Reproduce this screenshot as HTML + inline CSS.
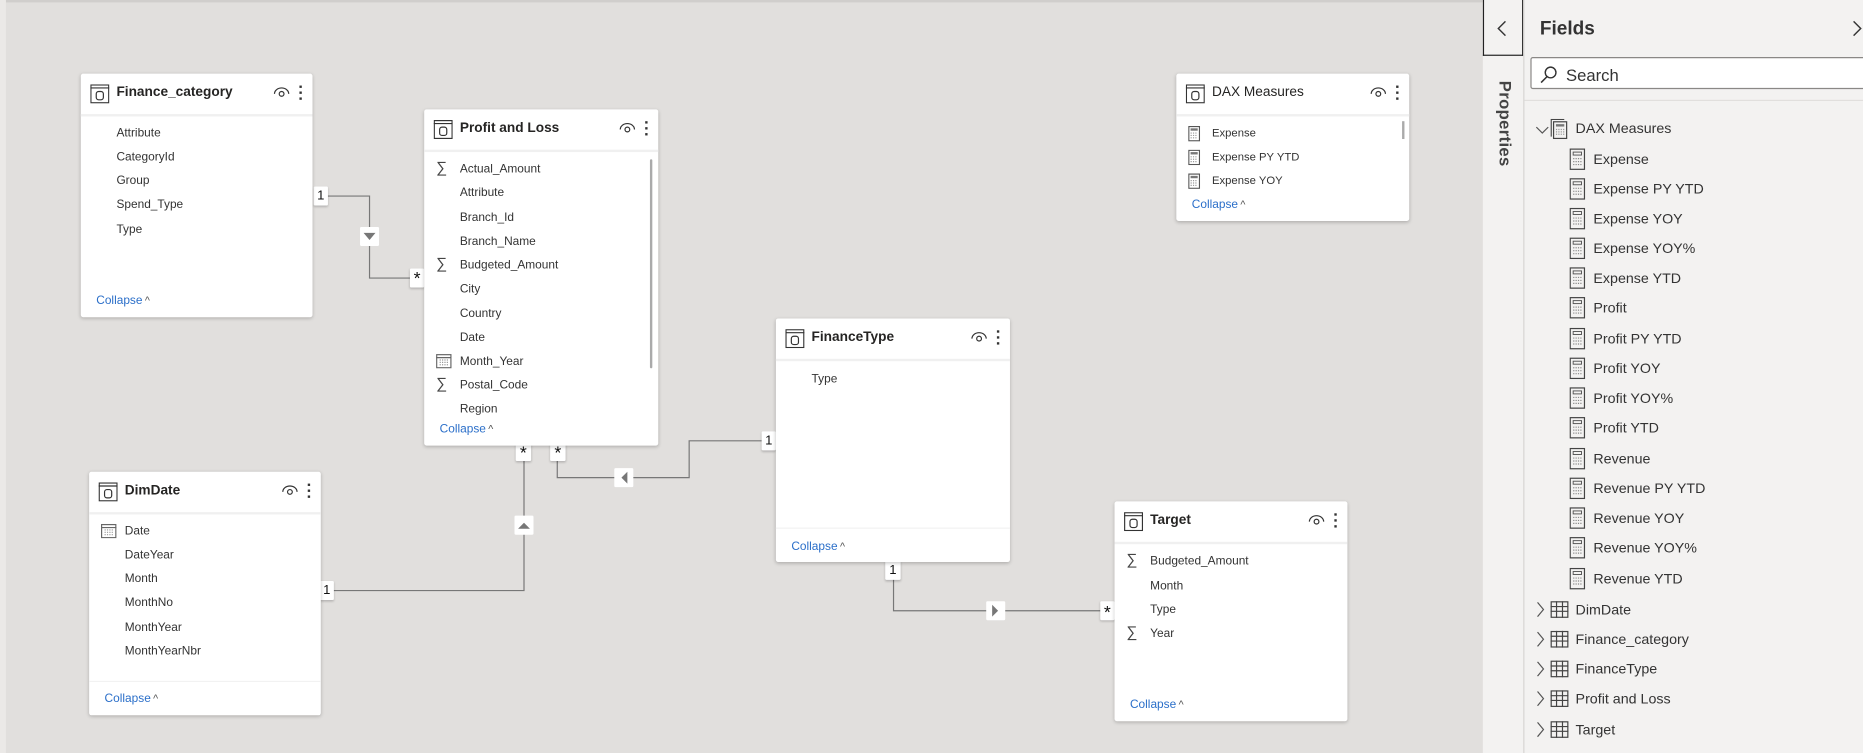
<!DOCTYPE html>
<html><head><meta charset="utf-8"><style>
html,body{margin:0;padding:0;width:1863px;height:753px;overflow:hidden;background:#e1dfdd}
#w{position:absolute;left:0;top:0;width:1568px;height:634px;transform:scale(1.1882);transform-origin:0 0;font-family:"Liberation Sans",sans-serif;}
.canvas{position:absolute;left:0;top:0;width:1248px;height:634px;background:#e1dfdd;border-top:2px solid #d0cecc;box-sizing:border-box}
.lstrip{position:absolute;left:0;top:0;width:5px;height:634px;background:#ebe9e7}
.card{position:absolute;background:#fff;box-shadow:0 1px 3px rgba(0,0,0,.22);border-radius:2px}
.hd{position:absolute;left:0;right:0;top:0;height:34px;border-bottom:2px solid #f0f0f0}
.ti{position:absolute;left:8px;top:9px}
.tt{position:absolute;left:30px;top:10px;font-size:11.5px;font-weight:bold;color:#252423}
.eye{position:absolute;right:19px;top:11px}
.dots{position:absolute;right:9px;top:10px;width:2px}
.dots i{display:block;width:2px;height:2px;background:#333;margin-bottom:3px}
.f{position:absolute;left:30px;font-size:10px;color:#333;line-height:12px}
.fi{position:absolute;left:10px}
.col{position:absolute;left:13px;font-size:10px;color:#2b6fc9}
.col span{font-size:9px;color:#555;margin-left:2px}
.sep{position:absolute;left:0;right:0;height:1px;background:#f2f2f2}
.lbl{position:absolute;background:#fff;font-size:11px;color:#111;text-align:center;box-shadow:0 1px 2px rgba(0,0,0,.2);border-radius:1px}
.panel{position:absolute;left:1282px;top:0;width:286px;height:634px;background:#f3f2f1;border-left:1px solid #d8d6d4}
.pstrip{position:absolute;left:1248px;top:0;width:34px;height:634px;background:#f3f2f1}
.tr{position:absolute;font-size:12px;color:#333;white-space:nowrap}
.mi{position:absolute;left:1322px}
</style></head><body><div id="w">
<div class="canvas"></div><div class="lstrip"></div>

<svg style="position:absolute;left:0;top:0" width="1248" height="634">
<g fill="none" stroke="#777" stroke-width="1">
<path d="M275 165H311V234H352"/>
<path d="M469 385V402H580V371H646"/>
<path d="M441 385V497H280"/>
<path d="M752 485V514H932"/>
</g>
<g>
<rect x="303" y="191" width="16" height="16" fill="#fff" rx="1"/><path d="M306 196h10l-5 6z" fill="#777"/>
<rect x="517" y="394" width="16" height="16" fill="#fff" rx="1"/><path d="M528 397v10l-5-5z" fill="#777"/>
<rect x="433" y="434" width="16" height="16" fill="#fff" rx="1"/><path d="M436 445h10l-5-5z" fill="#777"/>
<rect x="830" y="506" width="16" height="16" fill="#fff" rx="1"/><path d="M835 509v10l5-5z" fill="#777"/>
</g>
</svg>
<div class="lbl" style="left:264px;top:157px;width:12px;height:16px;line-height:16px">1</div>
<div class="lbl" style="left:345px;top:226px;width:12px;height:16px;line-height:18px;font-size:15px">*</div>
<div class="lbl" style="left:434px;top:373px;width:13px;height:15px;line-height:18px;font-size:15px">*</div>
<div class="lbl" style="left:463px;top:373px;width:13px;height:15px;line-height:18px;font-size:15px">*</div>
<div class="lbl" style="left:641px;top:363px;width:12px;height:16px;line-height:16px">1</div>
<div class="lbl" style="left:269px;top:489px;width:12px;height:16px;line-height:16px">1</div>
<div class="lbl" style="left:745px;top:472px;width:13px;height:16px;line-height:16px">1</div>
<div class="lbl" style="left:926px;top:506px;width:12px;height:16px;line-height:19px;font-size:15px">*</div>

<div class="card" style="left:68px;top:62px;width:195px;height:205px">
<div class="hd"><svg class="ti" width="16" height="16"><rect x=".5" y=".5" width="15" height="15" fill="none" stroke="#333"/><line x1="0" y1="3" x2="16" y2="3" stroke="#333"/><rect x="5" y="6" width="6" height="7" rx="2" fill="none" stroke="#333"/></svg><div class="tt">Finance_category</div>
<svg class="eye" width="14" height="10"><path d="M1 6a6 5 0 0 1 12 0" fill="none" stroke="#333"/><circle cx="7" cy="6" r="2" fill="none" stroke="#333"/></svg><div class="dots"><i></i><i></i><i></i></div></div>
<div class="f" style="top:45px">Attribute</div><div class="f" style="top:65px">CategoryId</div><div class="f" style="top:85px">Group</div><div class="f" style="top:105px">Spend_Type</div><div class="f" style="top:126px">Type</div>
<div class="col" style="top:186px">Collapse<span>^</span></div></div>

<div class="card" style="left:357px;top:92px;width:197px;height:283px">
<div class="hd"><svg class="ti" width="16" height="16"><rect x=".5" y=".5" width="15" height="15" fill="none" stroke="#333"/><line x1="0" y1="3" x2="16" y2="3" stroke="#333"/><rect x="5" y="6" width="6" height="7" rx="2" fill="none" stroke="#333"/></svg><div class="tt">Profit and Loss</div>
<svg class="eye" width="14" height="10"><path d="M1 6a6 5 0 0 1 12 0" fill="none" stroke="#333"/><circle cx="7" cy="6" r="2" fill="none" stroke="#333"/></svg><div class="dots"><i></i><i></i><i></i></div></div>
<div style="position:absolute;left:190px;top:42px;width:2px;height:176px;background:#aaa;border-radius:1px"></div>
<div class="fi" style="top:41px;font-size:13px;color:#444">∑</div><div class="f" style="top:45px">Actual_Amount</div>
<div class="f" style="top:65px">Attribute</div><div class="f" style="top:86px">Branch_Id</div><div class="f" style="top:106px">Branch_Name</div>
<div class="fi" style="top:122px;font-size:13px;color:#444">∑</div><div class="f" style="top:126px">Budgeted_Amount</div>
<div class="f" style="top:146px">City</div><div class="f" style="top:167px">Country</div><div class="f" style="top:187px">Date</div>
<svg class="fi" style="top:205px" width="13" height="13"><rect x=".5" y="1.5" width="12" height="11" fill="none" stroke="#666"/><line x1="0" y1="4" x2="13" y2="4" stroke="#666"/><path d="M3 6h7M3 8h7M3 10h7" stroke="#999" stroke-dasharray="1 1"/></svg><div class="f" style="top:207px">Month_Year</div>
<div class="fi" style="top:223px;font-size:13px;color:#444">∑</div><div class="f" style="top:227px">Postal_Code</div>
<div class="f" style="top:247px">Region</div>
<div class="col" style="top:264px">Collapse<span>^</span></div></div>

<div class="card" style="left:75px;top:397px;width:195px;height:205px">
<div class="hd"><svg class="ti" width="16" height="16"><rect x=".5" y=".5" width="15" height="15" fill="none" stroke="#333"/><line x1="0" y1="3" x2="16" y2="3" stroke="#333"/><rect x="5" y="6" width="6" height="7" rx="2" fill="none" stroke="#333"/></svg><div class="tt">DimDate</div>
<svg class="eye" width="14" height="10"><path d="M1 6a6 5 0 0 1 12 0" fill="none" stroke="#333"/><circle cx="7" cy="6" r="2" fill="none" stroke="#333"/></svg><div class="dots"><i></i><i></i><i></i></div></div>
<svg class="fi" style="top:43px" width="13" height="13"><rect x=".5" y="1.5" width="12" height="11" fill="none" stroke="#666"/><line x1="0" y1="4" x2="13" y2="4" stroke="#666"/><path d="M3 6h7M3 8h7M3 10h7" stroke="#999" stroke-dasharray="1 1"/></svg>
<div class="f" style="top:45px">Date</div><div class="f" style="top:65px">DateYear</div><div class="f" style="top:85px">Month</div><div class="f" style="top:105px">MonthNo</div><div class="f" style="top:126px">MonthYear</div><div class="f" style="top:146px">MonthYearNbr</div>
<div class="sep" style="top:176px"></div>
<div class="col" style="top:186px">Collapse<span>^</span></div></div>

<div class="card" style="left:653px;top:268px;width:197px;height:205px">
<div class="hd"><svg class="ti" width="16" height="16"><rect x=".5" y=".5" width="15" height="15" fill="none" stroke="#333"/><line x1="0" y1="3" x2="16" y2="3" stroke="#333"/><rect x="5" y="6" width="6" height="7" rx="2" fill="none" stroke="#333"/></svg><div class="tt">FinanceType</div>
<svg class="eye" width="14" height="10"><path d="M1 6a6 5 0 0 1 12 0" fill="none" stroke="#333"/><circle cx="7" cy="6" r="2" fill="none" stroke="#333"/></svg><div class="dots"><i></i><i></i><i></i></div></div>
<div class="f" style="top:46px">Type</div>
<div class="sep" style="top:176px"></div>
<div class="col" style="top:187px">Collapse<span>^</span></div></div>

<div class="card" style="left:938px;top:422px;width:196px;height:185px">
<div class="hd"><svg class="ti" width="16" height="16"><rect x=".5" y=".5" width="15" height="15" fill="none" stroke="#333"/><line x1="0" y1="3" x2="16" y2="3" stroke="#333"/><rect x="5" y="6" width="6" height="7" rx="2" fill="none" stroke="#333"/></svg><div class="tt">Target</div>
<svg class="eye" width="14" height="10"><path d="M1 6a6 5 0 0 1 12 0" fill="none" stroke="#333"/><circle cx="7" cy="6" r="2" fill="none" stroke="#333"/></svg><div class="dots"><i></i><i></i><i></i></div></div>
<div class="fi" style="top:41px;font-size:13px;color:#444">∑</div><div class="f" style="top:45px">Budgeted_Amount</div>
<div class="f" style="top:66px">Month</div><div class="f" style="top:86px">Type</div>
<div class="fi" style="top:102px;font-size:13px;color:#444">∑</div><div class="f" style="top:106px">Year</div>
<div class="col" style="top:166px">Collapse<span>^</span></div></div>

<div class="card" style="left:990px;top:62px;width:196px;height:124px">
<div class="hd"><svg class="ti" width="16" height="16"><rect x=".5" y=".5" width="15" height="15" fill="none" stroke="#333"/><line x1="0" y1="3" x2="16" y2="3" stroke="#333"/><rect x="5" y="6" width="6" height="7" rx="2" fill="none" stroke="#333"/></svg><div class="tt" style="font-weight:normal">DAX Measures</div>
<svg class="eye" width="14" height="10"><path d="M1 6a6 5 0 0 1 12 0" fill="none" stroke="#333"/><circle cx="7" cy="6" r="2" fill="none" stroke="#333"/></svg><div class="dots"><i></i><i></i><i></i></div></div>
<div style="position:absolute;left:190px;top:40px;width:2px;height:15px;background:#aaa"></div>
<svg class="fi" style="top:44px" width="10" height="13"><rect x=".5" y=".5" width="9" height="12" fill="none" stroke="#555"/><rect x="2" y="2" width="6" height="2" fill="#777"/><path d="M2 6h6M2 8h6M2 10h6" stroke="#999" stroke-dasharray="1 1"/></svg><div class="f" style="top:45px;font-size:9.5px">Expense</div>
<svg class="fi" style="top:64px" width="10" height="13"><rect x=".5" y=".5" width="9" height="12" fill="none" stroke="#555"/><rect x="2" y="2" width="6" height="2" fill="#777"/><path d="M2 6h6M2 8h6M2 10h6" stroke="#999" stroke-dasharray="1 1"/></svg><div class="f" style="top:65px;font-size:9.5px">Expense PY YTD</div>
<svg class="fi" style="top:84px" width="10" height="13"><rect x=".5" y=".5" width="9" height="12" fill="none" stroke="#555"/><rect x="2" y="2" width="6" height="2" fill="#777"/><path d="M2 6h6M2 8h6M2 10h6" stroke="#999" stroke-dasharray="1 1"/></svg><div class="f" style="top:85px;font-size:9.5px">Expense YOY</div>
<div class="col" style="top:105px">Collapse<span>^</span></div></div>

<!-- right side -->
<div class="pstrip"></div>
<div style="position:absolute;left:1248px;top:0;width:32px;height:46px;border:1px solid #222;border-top:none;background:#f3f2f1"></div>
<svg style="position:absolute;left:1258px;top:17px" width="12" height="14"><path d="M9 1L3 7l6 6" fill="none" stroke="#333" stroke-width="1.2"/></svg>
<div style="position:absolute;left:1256px;top:68px;transform-origin:0 0;transform:rotate(90deg) translate(0,-19px);font-size:14px;font-weight:bold;color:#444;white-space:nowrap;letter-spacing:.3px">Properties</div>
<div class="panel">
<div style="position:absolute;left:13px;top:16px;font-size:16px;font-weight:bold;color:#333">Fields</div>
<svg style="position:absolute;left:275px;top:17px" width="10" height="14"><path d="M2 1l6 6-6 6" fill="none" stroke="#333" stroke-width="1.2"/></svg>
<div style="position:absolute;left:5px;top:48px;width:290px;height:27px;background:#fff;border:1px solid #8a8886;border-radius:2px;box-sizing:border-box"></div>
<svg style="position:absolute;left:12px;top:55px" width="16" height="16"><circle cx="10" cy="6" r="4.5" fill="none" stroke="#333" stroke-width="1.2"/><line x1="7" y1="9.5" x2="2" y2="14.5" stroke="#333" stroke-width="1.3"/></svg>
<div style="position:absolute;left:35px;top:55px;font-size:14px;color:#333">Search</div>
<div style="position:absolute;left:0;top:84px;width:286px;height:1px;background:#e1dfdd"></div>
</div>
<svg style="position:absolute;left:1291px;top:102px" width="14" height="14"><path d="M2 5l5 5 5-5" fill="none" stroke="#555"/></svg>
<svg style="position:absolute;left:1305px;top:100px" width="16" height="18"><rect x="2.5" y="2.5" width="11" height="14" fill="none" stroke="#444"/><path d="M.5 15V.5h11" fill="none" stroke="#444"/><rect x="4.5" y="4.5" width="7" height="2" fill="#777"/><path d="M4.5 9h7M4.5 11h7M4.5 13h7" stroke="#999" stroke-dasharray="1 1"/></svg>
<div class="tr" style="left:1326px;top:101px">DAX Measures</div>

<svg style="position:absolute;left:1321px;top:0" width="14" height="500"><defs><g id="c"><rect x=".5" y=".5" width="12" height="17" fill="none" stroke="#444"/><rect x="3" y="3" width="7" height="2.5" fill="none" stroke="#555" stroke-width=".8"/><path d="M3 8.5h7M3 11h7M3 13.5h7" stroke="#888" stroke-dasharray="1 1"/></g></defs>
<use href="#c" y="125"/><use href="#c" y="150"/><use href="#c" y="175"/><use href="#c" y="200"/><use href="#c" y="225"/><use href="#c" y="250"/><use href="#c" y="276"/><use href="#c" y="301"/><use href="#c" y="326"/><use href="#c" y="351"/><use href="#c" y="377"/><use href="#c" y="402"/><use href="#c" y="427"/><use href="#c" y="452"/><use href="#c" y="478"/>
<g id="x"></g></svg>
<div class="tr" style="left:1341px;top:127px">Expense</div>
<div class="tr" style="left:1341px;top:152px">Expense PY YTD</div>
<div class="tr" style="left:1341px;top:177px">Expense YOY</div>
<div class="tr" style="left:1341px;top:202px">Expense YOY%</div>
<div class="tr" style="left:1341px;top:227px">Expense YTD</div>
<div class="tr" style="left:1341px;top:252px">Profit</div>
<div class="tr" style="left:1341px;top:278px">Profit PY YTD</div>
<div class="tr" style="left:1341px;top:303px">Profit YOY</div>
<div class="tr" style="left:1341px;top:328px">Profit YOY%</div>
<div class="tr" style="left:1341px;top:353px">Profit YTD</div>
<div class="tr" style="left:1341px;top:379px">Revenue</div>
<div class="tr" style="left:1341px;top:404px">Revenue PY YTD</div>
<div class="tr" style="left:1341px;top:429px">Revenue YOY</div>
<div class="tr" style="left:1341px;top:454px">Revenue YOY%</div>
<div class="tr" style="left:1341px;top:480px">Revenue YTD</div>

<svg style="position:absolute;left:1292px;top:500px" width="32" height="130">
<defs><path id="ch" d="M2 0l5 6-5 6" fill="none" stroke="#555"/>
<g id="tb"><rect x=".5" y=".5" width="14" height="13" fill="none" stroke="#444"/><path d="M0 4.5h15M0 8.5h15M5 0v14M10 0v14" stroke="#444" fill="none"/></g></defs>
<use href="#ch" x="0" y="7"/><use href="#tb" x="13" y="6"/>
<use href="#ch" x="0" y="32"/><use href="#tb" x="13" y="31"/>
<use href="#ch" x="0" y="57"/><use href="#tb" x="13" y="56"/>
<use href="#ch" x="0" y="82"/><use href="#tb" x="13" y="81"/>
<use href="#ch" x="0" y="108"/><use href="#tb" x="13" y="107"/>
</svg>
<div class="tr" style="left:1326px;top:506px">DimDate</div>
<div class="tr" style="left:1326px;top:531px">Finance_category</div>
<div class="tr" style="left:1326px;top:556px">FinanceType</div>
<div class="tr" style="left:1326px;top:581px">Profit and Loss</div>
<div class="tr" style="left:1326px;top:607px">Target</div>
</div></body></html>
